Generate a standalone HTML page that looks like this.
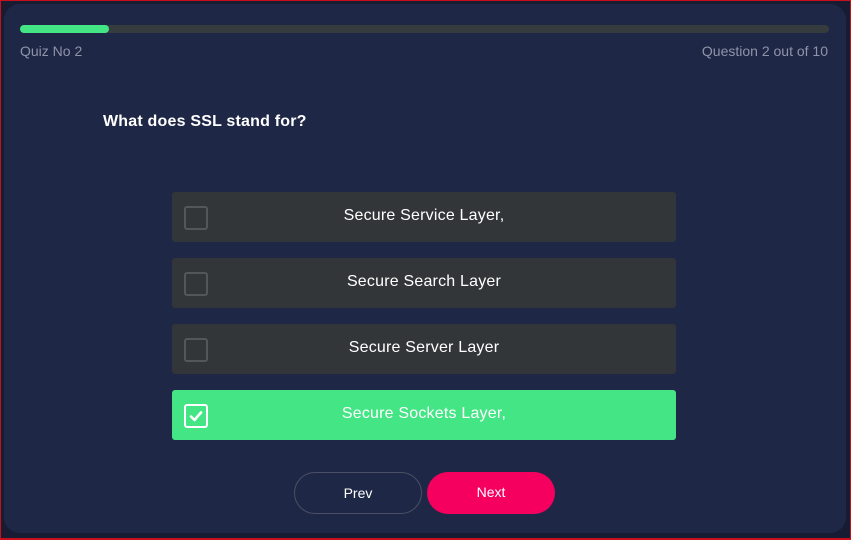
<!DOCTYPE html>
<html><head><style>
html,body{margin:0;padding:0;}
body{width:851px;height:539px;background:#171c33;position:relative;overflow:hidden;font-family:"Liberation Sans",sans-serif;}
.frame{position:absolute;left:0;top:0;width:849px;height:537px;border:1px solid #c8101c;border-bottom-width:2px;}
.card{position:absolute;left:4px;top:4px;width:842px;height:529px;background:#1f2746;border-radius:16px;}
.bar{position:absolute;left:20px;top:25px;width:809px;height:8px;background:#363c3d;border-radius:4px;}
.bar div{width:89px;height:8px;background:#44e585;border-radius:4px;}
.lbl{position:absolute;top:43px;color:#8e94a8;font-size:14px;}
.q{position:absolute;left:103px;top:113px;color:#fff;font-size:16px;font-weight:bold;letter-spacing:0.2px;}
.opt{position:absolute;left:172px;width:504px;height:50px;background:#333638;border-radius:3px;color:#fff;font-size:16px;text-align:center;line-height:48px;letter-spacing:0.2px;}
.cb{position:absolute;left:12px;top:14px;width:20px;height:20px;border:2px solid #545759;border-radius:3px;line-height:0;}
.cb svg{display:block;}
.sel{background:#44e585;}
.sel .cb{border-color:#fff;}
.btn{position:absolute;top:472px;width:128px;height:42px;border-radius:21px;color:#fff;font-size:14px;text-align:center;line-height:40px;box-sizing:border-box;}
</style></head><body>
<div class="frame"></div>
<div class="card"></div>
<div class="bar"><div></div></div>
<div class="lbl" style="left:20px">Quiz No 2</div>
<div class="lbl" style="right:23px">Question 2 out of 10</div>
<div class="q">What does SSL stand for?</div>
<div class="opt" style="top:192px"><div class="cb"></div>Secure Service Layer,</div>
<div class="opt" style="top:258px"><div class="cb"></div>Secure Search Layer</div>
<div class="opt" style="top:324px"><div class="cb"></div>Secure Server Layer</div>
<div class="opt sel" style="top:390px"><div class="cb"><svg width="20" height="20" viewBox="0 0 20 20"><path d="M5 10.5l3.5 3.5 6.5-7.5" stroke="#fff" stroke-width="2.6" fill="none" stroke-linecap="round" stroke-linejoin="round"/></svg></div>Secure Sockets Layer,</div>
<div class="btn" style="left:294px;border:1px solid #4b5064;">Prev</div>
<div class="btn" style="left:427px;background:#f5005f;">Next</div>
</body></html>
